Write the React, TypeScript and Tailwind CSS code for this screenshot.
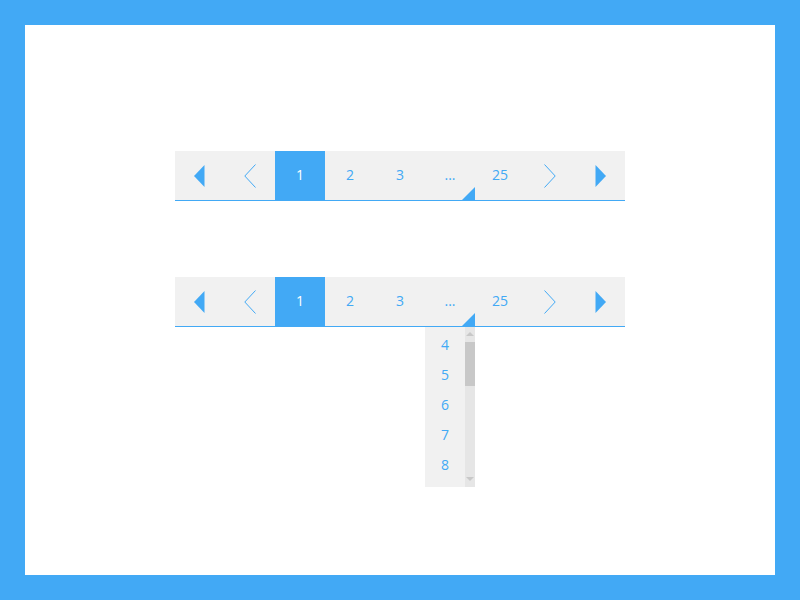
import { ReactNode } from 'react';

const blue = '#42a9f5';

function Cell({ children, active = false }: { children?: ReactNode; active?: boolean }) {
  return (
    <div
      className={`relative flex h-full w-[50px] items-center justify-center text-[14px] ${
        active ? 'bg-[#42a9f5] text-white' : 'text-[#42a9f5]'
      }`}
    >
      {children}
    </div>
  );
}

function Num({ children }: { children: ReactNode }) {
  return <span className="-mt-[2px]">{children}</span>;
}

function FirstIcon() {
  return (
    <svg width="12" height="22" viewBox="0 0 12 22">
      <path d="M10.5 0 L10.5 22 L0 11 Z" fill={blue} />
    </svg>
  );
}

function LastIcon() {
  return (
    <svg width="12" height="22" viewBox="0 0 12 22">
      <path d="M1.5 0 L1.5 22 L12 11 Z" fill={blue} />
    </svg>
  );
}

function PrevIcon() {
  return (
    <svg width="12" height="24" viewBox="0 0 12 24">
      <path d="M11.5 0.5 L0.8 12 L11.5 23.5" fill="none" stroke={blue} strokeWidth="1" />
    </svg>
  );
}

function NextIcon() {
  return (
    <svg width="12" height="24" viewBox="0 0 12 24">
      <path d="M0.5 0.5 L11.2 12 L0.5 23.5" fill="none" stroke={blue} strokeWidth="1" />
    </svg>
  );
}

function PageDropdown() {
  return (
    <div className="absolute left-0 top-[50px] flex h-[160px] w-[50px] bg-[#f1f1f1]">
      <div className="flex w-[40px] flex-col pt-[2px]">
        {[4, 5, 6, 7, 8].map((n) => (
          <div key={n} className="flex h-[30px] items-center justify-center text-[14px] text-[#42a9f5]">
            {n}
          </div>
        ))}
      </div>
      <div className="flex w-[10px] flex-col items-center bg-[#e6e6e6]">
        <div className="mt-[5px] h-0 w-0 border-x-[4px] border-b-[4px] border-x-transparent border-b-[#c8c8c8]" />
        <div className="mt-[6px] h-[44px] w-full bg-[#c8c8c8]" />
        <div className="flex-1" />
        <div className="mb-[6px] h-0 w-0 border-x-[4px] border-t-[4px] border-x-transparent border-t-[#c8c8c8]" />
      </div>
    </div>
  );
}

function Pagination({ open = false }: { open?: boolean }) {
  return (
    <div className="flex h-[50px] w-[450px] border-b border-[#42a9f5] bg-[#f1f1f1]">
      <Cell>
        <FirstIcon />
      </Cell>
      <Cell>
        <PrevIcon />
      </Cell>
      <Cell active>
        <Num>1</Num>
      </Cell>
      <Cell>
        <Num>2</Num>
      </Cell>
      <Cell>
        <Num>3</Num>
      </Cell>
      <Cell>
        <span className="-mt-[3px]">...</span>
        <div className="absolute bottom-0 right-0 h-0 w-0 border-l-[13px] border-b-[13px] border-l-transparent border-b-[#42a9f5]" />
        {open && <PageDropdown />}
      </Cell>
      <Cell>
        <Num>25</Num>
      </Cell>
      <Cell>
        <NextIcon />
      </Cell>
      <Cell>
        <LastIcon />
      </Cell>
    </div>
  );
}

export default function App() {
  return (
    <div className="h-[600px] w-[800px] bg-[#42a9f5] p-[25px]" style={{ fontFamily: '"Open Sans", sans-serif' }}>
      <div className="flex h-full w-full flex-col items-center gap-[76px] bg-white pt-[126px]">
        <Pagination />
        <Pagination open />
      </div>
    </div>
  );
}
